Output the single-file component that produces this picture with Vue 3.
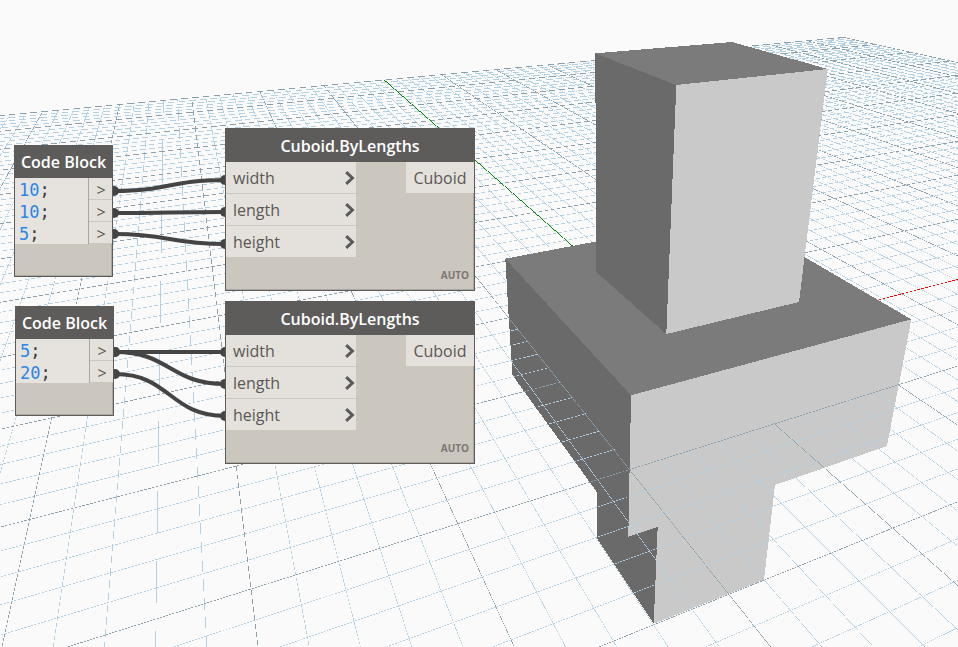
<script setup>
// Reference points that tie ground-plane units to scene coordinates: [gx, gy, x, y]
const anchors = [
  [-20, 0, 29.3, 519.3],
  [-15, 0, 235.7, 466.5],
  [-15, -5, 251.7, 588.3],
  [-10, -5, 457.7, 524],
  [-5, -5, 629.7, 469.3],
  [0, -5, 775, 424.3],
  [0, -10, 892.3, 528.7],
  [-5, -10, 728.7, 593.7],
  [0, 50, 384.3, 80],
  [50, 50, 843.3, 37.3],
]

// Least-squares projective transform from the plane to the scene
function fitPlane(points) {
  const m = Array.from({ length: 8 }, () => new Array(9).fill(0))
  const add = (row, rhs) => {
    for (let i = 0; i < 8; i++) {
      for (let j = 0; j < 8; j++) m[i][j] += row[i] * row[j]
      m[i][8] += row[i] * rhs
    }
  }
  for (const [gx, gy, px, py] of points) {
    const a = gx / 50
    const b = gy / 50
    const x = px / 1000
    const y = py / 1000
    add([a, b, 1, 0, 0, 0, -a * x, -b * x], x)
    add([0, 0, 0, a, b, 1, -a * y, -b * y], y)
  }
  for (let c = 0; c < 8; c++) {
    let p = c
    for (let r = c + 1; r < 8; r++) if (Math.abs(m[r][c]) > Math.abs(m[p][c])) p = r
    ;[m[c], m[p]] = [m[p], m[c]]
    for (let r = 0; r < 8; r++) {
      if (r === c) continue
      const f = m[r][c] / m[c][c]
      for (let k = c; k < 9; k++) m[r][k] -= f * m[c][k]
    }
  }
  return m.map((row, i) => row[8] / row[i])
}

const h = fitPlane(anchors)

function project(gx, gy) {
  const a = gx / 50
  const b = gy / 50
  return [
    1000 * (h[0] * a + h[1] * b + h[2]),
    1000 * (h[3] * a + h[4] * b + h[5]),
    h[6] * a + h[7] * b + 1,
  ]
}

const NEAR = 0.25
const HALF_WIDTH = 0.3

// Sliver between two plane points, cut where it passes behind the camera.
// It is thinner than a pixel and unsmoothed, so it breaks into dashes.
function segment(x1, y1, x2, y2, half = HALF_WIDTH) {
  let p = project(x1, y1)
  let q = project(x2, y2)
  if (p[2] < NEAR && q[2] < NEAR) return ''
  const cut = (s, t) => {
    const k = (NEAR - s[2]) / (t[2] - s[2])
    return s.map((v, i) => v + k * (t[i] - v))
  }
  if (p[2] < NEAR) p = cut(p, q)
  if (q[2] < NEAR) q = cut(q, p)
  const [ax, ay] = [p[0] / p[2], p[1] / p[2]]
  const [bx, by] = [q[0] / q[2], q[1] / q[2]]
  const len = Math.hypot(bx - ax, by - ay)
  const nx = ((by - ay) / len) * half
  const ny = ((ax - bx) / len) * half
  const f = (x, y) => `${x.toFixed(2)} ${y.toFixed(2)}`
  return `M${f(ax + nx, ay + ny)}L${f(bx + nx, by + ny)}L${f(bx - nx, by - ny)}L${f(ax - nx, ay - ny)}Z`
}

let minor = ''
let major = ''
for (let i = -50; i <= 50; i++) {
  const d = segment(i, -50, i, 50) + segment(-50, i, 50, i)
  if (i % 5) minor += d
  else major += d
}
const xAxis = segment(0, 0, 50, 0)
const yAxis = segment(0, 0, 0, 50, 0.35)

const codeBlocks = [
  { id: 'a', lines: ['10', '10', '5'] },
  { id: 'b', lines: ['5', '20'] },
]
const cuboids = ['a', 'b']
const inputs = ['width', 'length', 'height']

const wires = [
  [114, 191, 225, 180],
  [114, 213, 225, 212],
  [114, 234, 225, 244],
  [115, 352, 225, 352],
  [115, 352, 225, 384],
  [115, 374, 225, 416],
]
const wirePath = ([x1, y1, x2, y2]) => {
  const mid = (x1 + x2) / 2
  return `M${x1} ${y1}C${mid} ${y1} ${mid} ${y2} ${x2} ${y2}`
}
</script>

<template>
  <main class="workspace">
    <svg class="scene" viewBox="0 0 958 647" preserveAspectRatio="xMinYMin slice" aria-hidden="true">
      <g shape-rendering="crispEdges">
        <polygon class="side" points="505.3,258.7 631,395.3 628.3,536.7 657.7,527 653.7,623.7 597,538.7 597,492.3 512.3,375" />
        <polygon class="front" points="631,395.3 911.3,319.3 887,446 775,485 764,579.7 653.7,623.7 657.7,527 628.3,536.7" />
        <path class="minor" :d="minor" />
        <path class="major" :d="major" />
        <path class="x-axis" :d="xAxis" />
        <path class="y-axis" :d="yAxis" />
        <polygon class="side" points="505.3,258.7 631,395.3 629.7,468.5 508.7,317" />
        <polygon class="front" points="631,395.3 911.3,319.3 899,384.3 629.9,468" />
        <polygon class="top" points="505.3,258.7 596,241.5 805,257.3 911.3,319.3 631,395.3" />
        <polygon class="side" points="595.3,53.3 676.3,85 666.3,334 596.2,272" />
        <polygon class="front" points="676.3,85 827.7,69 799,302 666.3,334" />
        <polygon class="top" points="595.3,53.3 732,42 827.7,69 676.3,85" />
      </g>
    </svg>

    <svg class="wires" aria-hidden="true">
      <g v-for="(w, i) in wires" :key="i">
        <path :d="wirePath(w)" />
        <circle :cx="w[0]" :cy="w[1]" r="5" />
        <circle :cx="w[2]" :cy="w[3]" r="5" />
      </g>
    </svg>

    <section v-for="b in codeBlocks" :key="b.id" class="node code-node" :class="'code-' + b.id">
      <h2>Code Block</h2>
      <div class="code-body">
        <code class="code">
          <span v-for="(n, i) in b.lines" :key="i" class="line"><span class="num">{{ n }}</span>;</span>
        </code>
        <div class="outs">
          <button v-for="(n, i) in b.lines" :key="i" type="button" :aria-label="'Output ' + (i + 1)">&gt;</button>
        </div>
      </div>
    </section>

    <section v-for="c in cuboids" :key="c" class="node cuboid-node" :class="'cuboid-' + c">
      <h2>Cuboid.ByLengths</h2>
      <div class="ports">
        <div class="inputs">
          <button v-for="p in inputs" :key="p" type="button">
            {{ p }}
            <svg viewBox="0 0 10 14" width="10" height="14" aria-hidden="true">
              <path d="M1.2 1.2L7.4 7L1.2 12.8" />
            </svg>
          </button>
        </div>
        <button class="output" type="button">Cuboid</button>
      </div>
      <span class="lacing">AUTO</span>
    </section>
  </main>
</template>

<style>
body {
  margin: 0;
  background: #fafafa;
}
</style>

<style scoped>
.workspace {
  position: relative;
  min-height: 100vh;
  overflow: hidden;
  font-family: "Open Sans", "Noto Sans", sans-serif;
  color: #5a5854;
}
.scene,
.wires {
  position: absolute;
  inset: 0;
  width: 100%;
  height: 100%;
}
.minor { fill: #b3d1e2; }
.major { fill: #8b9fad; }
.x-axis { fill: #ff0000; }
.y-axis { fill: #008000; }
.side { fill: #6a6a6a; }
.front { fill: #c9c9c9; }
.top { fill: #7b7b7b; }

.wires path {
  fill: none;
  stroke: #444444;
  stroke-width: 4;
}
.wires circle { fill: #444444; }

.node {
  position: absolute;
  box-sizing: border-box;
  border: 1px solid #5e5c5a;
  border-top: 0;
  background: #cbc6be;
  box-shadow: inset -1px -1px 0 #aca8a1;
}
h2 {
  margin: 0 -1px;
  padding-top: 2px;
  background: #5e5c5a;
  color: #ffffff;
  font-size: 16px;
  font-weight: 600;
  line-height: 31px;
  text-align: center;
  white-space: nowrap;
}
button {
  margin: 0;
  border: 0;
  padding: 0;
  background: #e4e1dc;
  color: inherit;
  font: inherit;
}

.code-node {
  width: 99px;
  padding-bottom: 32px;
}
.code-a { left: 14px; top: 145px; }
.code-b { left: 15px; top: 306px; }
.code-body { display: flex; }
.code {
  flex: 1;
  padding-left: 4px;
  border-right: 1px solid #aaa7a3;
  background: #e6e3df;
  color: #3a3a3a;
  font: 17px/22px "DejaVu Sans Mono", monospace;
}
.line {
  display: block;
  height: 22px;
  line-height: 25px;
}
.num { color: #2a86e8; }
.outs {
  display: flex;
  flex-direction: column;
  width: 23px;
}
.outs button {
  height: 22px;
  padding: 3px 0 0 1px;
  border-bottom: 1px solid #cbc6be;
  font-size: 16px;
  line-height: 18px;
}

.cuboid-node {
  width: 250px;
  font-size: 16px;
}
.cuboid-node h2 { line-height: 32px; }
.cuboid-a { left: 225px; top: 128px; }
.cuboid-b { left: 225px; top: 301px; }
.ports {
  display: flex;
  justify-content: space-between;
  align-items: flex-start;
}
.inputs {
  display: grid;
  gap: 1px;
  width: 130px;
}
.inputs button {
  display: flex;
  align-items: center;
  justify-content: space-between;
  height: 31px;
  padding: 0 1px 0 7px;
}
.inputs path {
  fill: none;
  stroke: #5a5a5a;
  stroke-width: 3;
}
.output {
  width: 68px;
  height: 31px;
}
.lacing {
  display: block;
  padding: 11px 5px 8px;
  color: #7b7771;
  font-size: 10px;
  font-weight: 700;
  line-height: 14px;
  text-align: right;
}
</style>
